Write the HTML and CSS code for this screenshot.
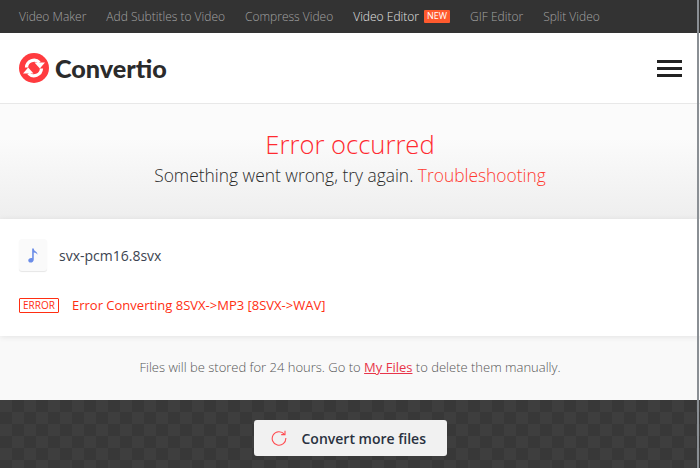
FILE: index.html
```html
<!DOCTYPE html>
<html lang="en">
<head>
<meta charset="utf-8">
<title>Convertio</title>
<link rel="stylesheet" href="styles.css">
</head>
<body>
<div class="page">
  <nav class="topnav">
    <a class="nav-item">Video Maker</a>
    <a class="nav-item">Add Subtitles to Video</a>
    <a class="nav-item">Compress Video</a>
    <a class="nav-item nav-active">Video Editor<span class="badge-new">NEW</span></a>
    <a class="nav-item">GIF Editor</a>
    <a class="nav-item">Split Video</a>
  </nav>
  <header class="header">
    <div class="logo">
      <svg class="logo-mark" width="30" height="30" viewBox="0 0 30 30">
        <circle cx="15" cy="15" r="15" fill="#ff3b3f"/>
        <path d="M7.500 14.500A7.600 7.600 0 0 1 20.500 9.500" fill="none" stroke="#fff" stroke-width="3.200"/>
        <path d="M15.500 9.500h10.500l-5.200 6z" fill="#fff"/>
        <path d="M22.500 15.500A7.600 7.600 0 0 1 9.500 20.500" fill="none" stroke="#fff" stroke-width="3.200"/>
        <path d="M14.500 20.500H4l5.200-6z" fill="#fff"/>
      </svg>
      <span class="logo-text">Convertio</span>
    </div>
    <button class="burger" aria-label="Menu"><span></span><span></span><span></span></button>
  </header>
  <section class="hero">
    <h1 class="hero-title">Error occurred</h1>
    <p class="hero-sub">Something went wrong, try again. <a class="hero-link">Troubleshooting</a></p>
  </section>
  <section class="card">
    <div class="file-row">
      <div class="file-icon">
        <svg width="10" height="15" viewBox="0 0 12 17"><path d="M5 0h1.900c.2 2.200 1.600 3.200 3.100 4.200.9.600 1.300 1.600 1.200 3.300-.5-1.300-1.800-2.300-4.300-2.700v8.400c0 2.300-1.700 3.800-3.700 3.800C1.500 17 .3 15.900.3 14.500c0-1.800 1.700-3 3.400-3 .5 0 1 .1 1.300.2z" fill="#6b8de8"/></svg>
      </div>
      <span class="file-name">svx-pcm16.8svx</span>
    </div>
    <div class="error-row">
      <span class="error-tag">ERROR</span>
      <span class="error-text">Error Converting 8SVX-&gt;MP3 [8SVX-&gt;WAV]</span>
    </div>
  </section>
  <p class="note">Files will be stored for 24 hours. Go to <a class="note-link">My Files</a> to delete them manually.</p>
  <footer class="footer">
    <button class="more-btn">
      <svg class="more-icon" width="16" height="16" viewBox="0 0 16 16" fill="none" stroke="#ff4b50" stroke-width="1.100"><path d="M13.300 4.200A6.800 6.800 0 1 0 14.800 8"/><path d="M14 .8v3.800h-3.800" /></svg>
      <span>Convert more files</span>
    </button>
  </footer>
  <div class="scrollbar"></div>
</div>
</body>
</html>
```
FILE: styles.css
```css
* { box-sizing: border-box; }
html, body { margin: 0; padding: 0; }
body { font-family: "Open Sans", sans-serif; background: #fff; }
.page { position: relative; width: 700px; height: 468px; overflow: hidden; display: flex; flex-direction: column; }
.topnav { height: 33px; background: #333; display: flex; align-items: center; padding-left: 19px; gap: 20px; flex: none; }
.nav-item { color: #a3a3a3; font-size: 12px; font-weight: 300; white-space: nowrap; display: flex; align-items: center; }
.nav-active { color: #e4e4e4; }
.badge-new { background: #ff5a2e; color: #fff; font-size: 9px; font-weight: 400; line-height: 12px; height: 13px; padding: 0 3px; border-radius: 1px; margin-left: 5px; }
.header { height: 71px; flex: none; background: #fff; border-bottom: 1px solid #e8e8e8; display: flex; align-items: center; justify-content: space-between; padding: 0 18px 0 19px; }
.logo { display: flex; align-items: center; gap: 6px; }
.logo-mark { display: block; }
.logo-text { font-family: "Lato", sans-serif; font-weight: 900; font-size: 25.2px; color: #2b2b2b; }
.burger { display: flex; flex-direction: column; gap: 4px; width: 25px; padding: 0; border: 0; background: none; }
.burger span { display: block; height: 3px; background: #222; }
.hero { height: 115px; flex: none; background: linear-gradient(#fbfbfb, #fbfbfb 30%, #eeeeee); text-align: center; padding-top: 24px; }
.hero-title { margin: 0; font-size: 25.6px; font-weight: 350; line-height: 34px; color: #ff2a30; }
.hero-sub { margin: 0; font-size: 17.4px; font-weight: 340; line-height: 26px; color: #2a2a2a; }
.hero-link { color: #ff3a30; }
.card { height: 117px; flex: none; background: #fff; box-shadow: 0 1px 6px rgba(0,0,0,.09); padding: 20px 19px 0; position: relative; }
.file-row { display: flex; align-items: center; gap: 12px; height: 32px; }
.file-icon { width: 28px; height: 32px; background: #fafafa; border-radius: 3px; box-shadow: 0 1px 1px rgba(0,0,0,.1); display: flex; align-items: center; justify-content: center; }
.file-name { font-size: 14px; color: #3c4450; }
.error-row { display: flex; align-items: center; gap: 13px; margin-top: 25px; }
.error-tag { width: 40px; height: 15px; border: 1px solid #ff2e12; border-radius: 1px; color: #ff2e12; font-size: 10px; line-height: 13px; text-align: center; }
.error-text { font-size: 13px; color: #ff2e12; line-height: 18px; }
.note { height: 64px; flex: none; margin: 0; background: #f9f9f9; text-align: center; font-size: 13px; font-weight: 300; line-height: 62px; color: #555; }
.note-link { color: #e8344a; text-decoration: underline; font-weight: 400; }
.footer { flex: 1; background-color: #3a3a3a; background-image: conic-gradient(#383838 25%, #3e3e3e 0 50%, #383838 0 75%, #3e3e3e 0); background-size: 24px 24px; display: flex; justify-content: center; padding-top: 20px; }
.more-btn { width: 193px; height: 36px; border: 0; border-radius: 3px; background: #f1f1f1; font-family: inherit; font-size: 14px; font-weight: 600; color: #2a3140; display: flex; align-items: center; gap: 15px; padding: 0 0 0 17px; }
.more-icon { display: block; }
.scrollbar { position: absolute; top: 0; right: 1px; width: 2px; height: 468px; background: #8a8f94; }
```
